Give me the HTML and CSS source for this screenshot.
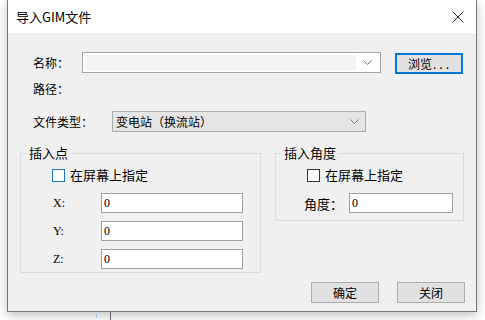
FILE: index.html
```html
<!DOCTYPE html>
<html lang="zh-CN">
<head>
    <meta charset="UTF-8">
    <title>导入GIM文件</title>
    <link rel="stylesheet" href="styles.css">
</head>
<body>
    <div id="dialog">
        <div class="titlebar">
            <span class="title">导入GIM文件</span>
            <svg class="close" width="12" height="12" viewBox="0 0 12 12">
                <path d="M0.5 0.5 L11.5 11.5 M11.5 0.5 L0.5 11.5" stroke="#222" stroke-width="1" fill="none"/>
            </svg>
        </div>
        <div class="content">
            <div class="row row-name">
                <span class="label">名称：</span>
                <div class="combo">
                    <span class="combo-edit"></span>
                    <svg class="chev" width="9" height="5" viewBox="0 0 9 5"><path d="M0.5 0.5 L4.5 4.5 L8.5 0.5" stroke="#777" fill="none"/></svg>
                </div>
                <span class="btn btn-default">浏览<span class="dots">...</span></span>
            </div>
            <div class="row row-path">
                <span class="label">路径：</span>
            </div>
            <div class="row row-type">
                <span class="label label-wide">文件类型：</span>
                <div class="select">
                    <span class="select-text">变电站（换流站）</span>
                    <svg class="chev" width="9" height="5" viewBox="0 0 9 5"><path d="M0.5 0.5 L4.5 4.5 L8.5 0.5" stroke="#777" fill="none"/></svg>
                </div>
            </div>
            <div class="groups">
                <fieldset class="group group-point">
                    <legend>插入点</legend>
                    <div class="check"><span class="box box-focus"></span>在屏幕上指定</div>
                    <div class="field"><span class="flabel">X:</span><span class="input">0</span></div>
                    <div class="field field-next"><span class="flabel">Y:</span><span class="input">0</span></div>
                    <div class="field field-next"><span class="flabel">Z:</span><span class="input">0</span></div>
                </fieldset>
                <fieldset class="group group-angle">
                    <legend>插入角度</legend>
                    <div class="check"><span class="box"></span>在屏幕上指定</div>
                    <div class="field"><span class="alabel">角度：</span><span class="input input-angle">0</span></div>
                </fieldset>
            </div>
            <div class="buttons">
                <span class="btn">确定</span>
                <span class="btn">关闭</span>
            </div>
        </div>
    </div>
    <div class="below">
        <span class="mark"></span>
        <span class="vline"></span>
    </div>
</body>
</html>
```

FILE: styles.css
```css
* {
    margin: 0;
    padding: 0;
    box-sizing: border-box;
}
body {
    width: 485px;
    height: 320px;
    overflow: hidden;
    background-color: #fff;
    font-family: "Noto Sans CJK SC", "Noto Sans", sans-serif;
    font-size: 12px;
    color: #000;
    text-spacing-trim: space-all;
}
#dialog {
    width: 470px;
    height: 312px;
    margin-left: 7px;
    border: 1px solid #777;
    border-top: 0;
    box-shadow: 0 3px 10px rgba(0, 0, 0, 0.25);
    display: flex;
    flex-direction: column;
}
.titlebar {
    height: 33px;
    background-color: #fff;
    display: flex;
    align-items: center;
    justify-content: space-between;
    padding: 0 12px 0 8px;
}
.title {
    font-size: 13px;
    line-height: 16px;
}
.close {
    display: block;
}
.content {
    flex: 1;
    background-color: #f0f0f0;
    padding: 19px 0 0 0;
}
.row {
    display: flex;
    align-items: center;
    padding-left: 25px;
}
.label {
    width: 49px;
    line-height: 16px;
}
.label-wide {
    width: 79px;
}
.row-name {
    height: 21px;
}
.combo {
    width: 299px;
    height: 21px;
    border: 1px solid #a5a5a5;
    background-color: #fff;
    display: flex;
    align-items: center;
    padding: 2px;
}
.combo-edit {
    flex: 1;
    height: 15px;
    background-color: #f4f4f4;
}
.chev {
    display: block;
    margin: 0 6px 0 7px;
}
.btn {
    width: 68px;
    height: 21px;
    border: 1px solid #adadad;
    background-color: #e1e1e1;
    display: flex;
    align-items: center;
    justify-content: center;
    line-height: 16px;
}
.btn-default {
    margin-left: 14px;
    margin-top: 2px;
    border-color: #0078d7;
    box-shadow: inset 0 0 0 1px #0078d7;
    background-color: #e1e1e1;
    padding-left: 2px;
}
.dots {
    letter-spacing: 3px;
    margin-left: 1px;
}
.row-path {
    margin-top: 8px;
}
.row-type {
    margin-top: 14px;
}
.select {
    width: 254px;
    height: 21px;
    border: 1px solid #adadad;
    background-color: #e5e5e5;
    display: flex;
    align-items: center;
    justify-content: space-between;
    padding-left: 3px;
}
.select .chev {
    margin-right: 6px;
}
.groups {
    display: flex;
    align-items: flex-start;
    margin: 13px 0 0 12px;
}
.group {
    border: 1px solid #dcdcdc;
    padding: 0;
    min-width: 0;
}
.group legend {
    margin-left: 6px;
    padding: 0 2px;
    font-size: 13px;
    line-height: 16px;
}
.group-point {
    width: 241px;
    padding-bottom: 3px;
}
.group-angle {
    width: 189px;
    margin-left: 14px;
    padding-bottom: 7px;
}
.check {
    display: flex;
    align-items: center;
    margin: 6px 0 0 31px;
    font-size: 13px;
    line-height: 16px;
}
.box {
    width: 13px;
    height: 13px;
    border: 1px solid #333;
    background-color: #fff;
    margin-right: 5px;
}
.box-focus {
    border-color: #1a73c9;
}
.field {
    display: flex;
    align-items: center;
    margin: 10px 0 0 31px;
}
.field-next {
    margin-top: 8px;
}
.flabel {
    width: 49px;
    font-family: "Liberation Serif", "DejaVu Serif", serif;
    font-size: 12px;
    padding-left: 1px;
}
.alabel {
    width: 45px;
    margin-left: -3px;
    font-size: 13px;
}
.input {
    width: 142px;
    height: 20px;
    border: 1px solid #a0a0a0;
    background-color: #fff;
    padding-left: 2px;
    font-family: "Liberation Serif", "DejaVu Serif", serif;
    font-size: 12px;
    line-height: 18px;
}
.input-angle {
    width: 104px;
}
.buttons {
    display: flex;
    justify-content: flex-end;
    gap: 18px;
    margin: 9px 11px 0 0;
}
.below {
    display: flex;
    align-items: flex-start;
    height: 8px;
}
.mark {
    width: 1px;
    height: 4px;
    margin: 2px 0 0 96px;
    background-color: #9cc3e6;
}
.vline {
    width: 1px;
    height: 8px;
    margin-left: 13px;
    background-color: #666;
}
```
